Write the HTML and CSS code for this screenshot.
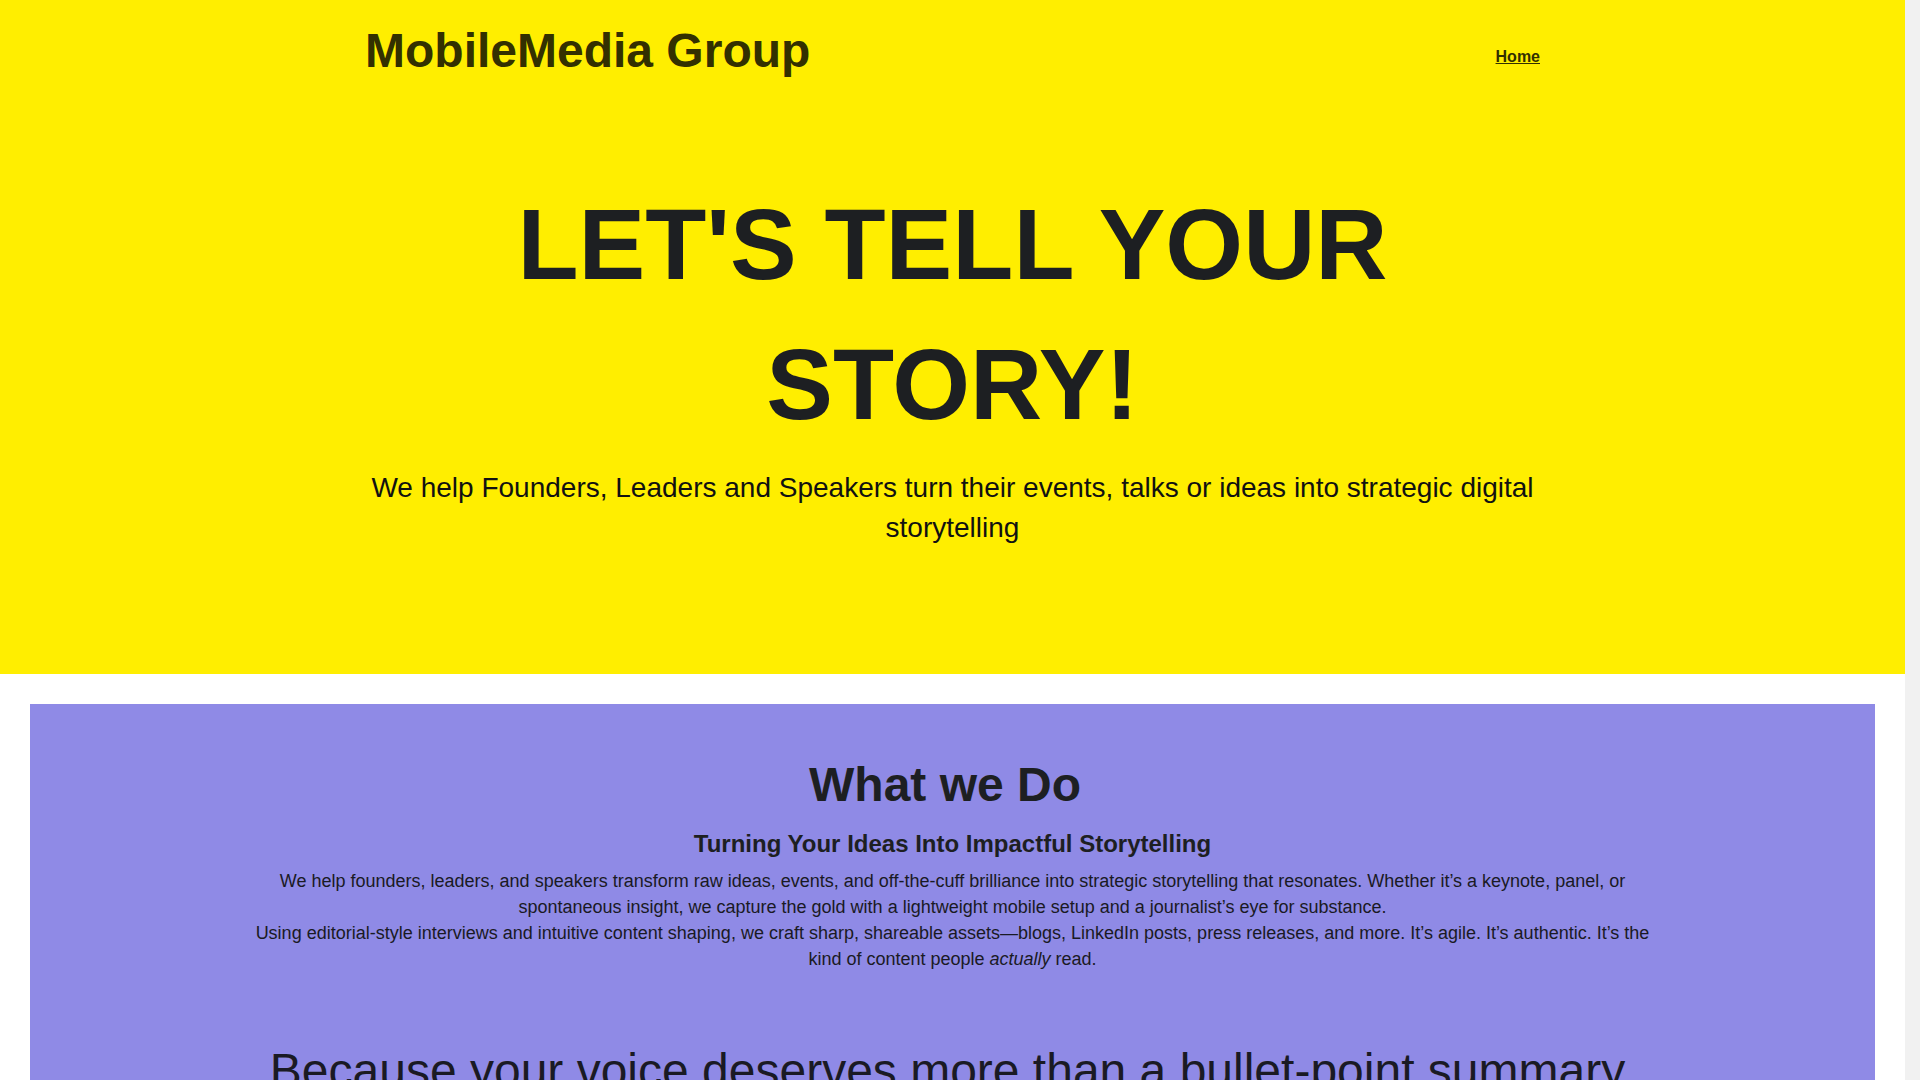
FILE: index.html
```html
<!DOCTYPE html>
<html lang="en">
<head>
<meta charset="utf-8">
<title>MobileMedia Group</title>
<link rel="stylesheet" href="styles.css">
</head>
<body>
<div class="page">
<section class="hero">
  <div class="container">
    <header class="site-header">
      <h1 class="logo">MobileMedia Group</h1>
      <nav class="nav"><a href="#" class="nav-link">Home</a></nav>
    </header>
    <h2 class="hero-title">LET'S TELL YOUR STORY!</h2>
    <p class="hero-sub">We help Founders, Leaders and Speakers turn their events, talks or ideas into strategic digital storytelling</p>
  </div>
</section>
<main class="panel">
  <div class="panel-inner">
    <h2 class="panel-title">What we Do</h2>
    <h3 class="panel-subtitle">Turning Your Ideas Into Impactful Storytelling</h3>
    <p class="panel-text">We help founders, leaders, and speakers transform raw ideas, events, and off-the-cuff brilliance into strategic storytelling that resonates. Whether it’s a keynote, panel, or spontaneous insight, we capture the gold with a lightweight mobile setup and a journalist’s eye for substance.<br>Using editorial-style interviews and intuitive content shaping, we craft sharp, shareable assets—blogs, LinkedIn posts, press releases, and more. It’s agile. It’s authentic. It’s the kind of content people <em>actually</em> read.</p>
    <h2 class="panel-lead">Because your voice deserves more than a bullet-point summary</h2>
  </div>
</main>
</div>
</body>
</html>
```

FILE: styles.css
```css
html, body {
  margin: 0;
  padding: 0;
  height: 100%;
  overflow: hidden;
}

body {
  font-family: "Liberation Sans", Arial, sans-serif;
  background: #f1f1f1;
  color: #1d1f23;
}

.page {
  height: 100vh;
  margin-right: 15px;
  background: #ffffff;
  overflow-y: scroll;
}

.page::-webkit-scrollbar {
  width: 15px;
}

.page::-webkit-scrollbar-track {
  background: #f1f1f1;
}

.page::-webkit-scrollbar-thumb {
  background: #c1c1c1;
}

.hero {
  background: #ffee00;
  padding-bottom: 125px;
}

.container {
  max-width: 1175px;
  margin: 0 auto;
}

.site-header {
  display: flex;
  justify-content: space-between;
  align-items: center;
  padding-top: 22px;
}

.logo {
  margin: 0;
  font-size: 48px;
  line-height: 1.2;
  font-weight: 700;
  color: #333000;
}

.nav {
  padding-top: 12px;
}

.nav-link {
  font-size: 16px;
  line-height: 1.2;
  font-weight: 700;
  color: #333000;
  text-decoration: underline;
}

.hero-title {
  margin: 94px 0 14px;
  font-size: 100px;
  line-height: 1.4;
  font-weight: 700;
  text-align: center;
  color: #1d1f22;
}

.hero-sub {
  margin: 0;
  font-size: 28px;
  line-height: 1.45;
  text-align: center;
  color: #111111;
}

.panel {
  display: block;
  background: #8f8ae6;
  margin: 30px 30px 0;
  min-height: 5200px;
}

.panel-inner {
  max-width: 1410px;
  margin: 0 auto;
  padding-top: 52px;
  text-align: center;
}

.panel-title {
  margin: 0 15px 17px 0;
  font-size: 48px;
  line-height: 1.2;
  font-weight: 700;
  color: #1d1f22;
}

.panel-subtitle {
  margin: 0 0 9px;
  font-size: 24px;
  line-height: 1.2;
  font-weight: 700;
  color: #1d1f22;
}

.panel-text {
  margin: 0 0 70px;
  font-size: 18px;
  line-height: 26px;
  color: #1a1a24;
}

.panel-lead {
  margin: 0 10px 0 0;
  font-size: 48px;
  line-height: 1.2;
  font-weight: 400;
  color: #1a1a24;
}
```
